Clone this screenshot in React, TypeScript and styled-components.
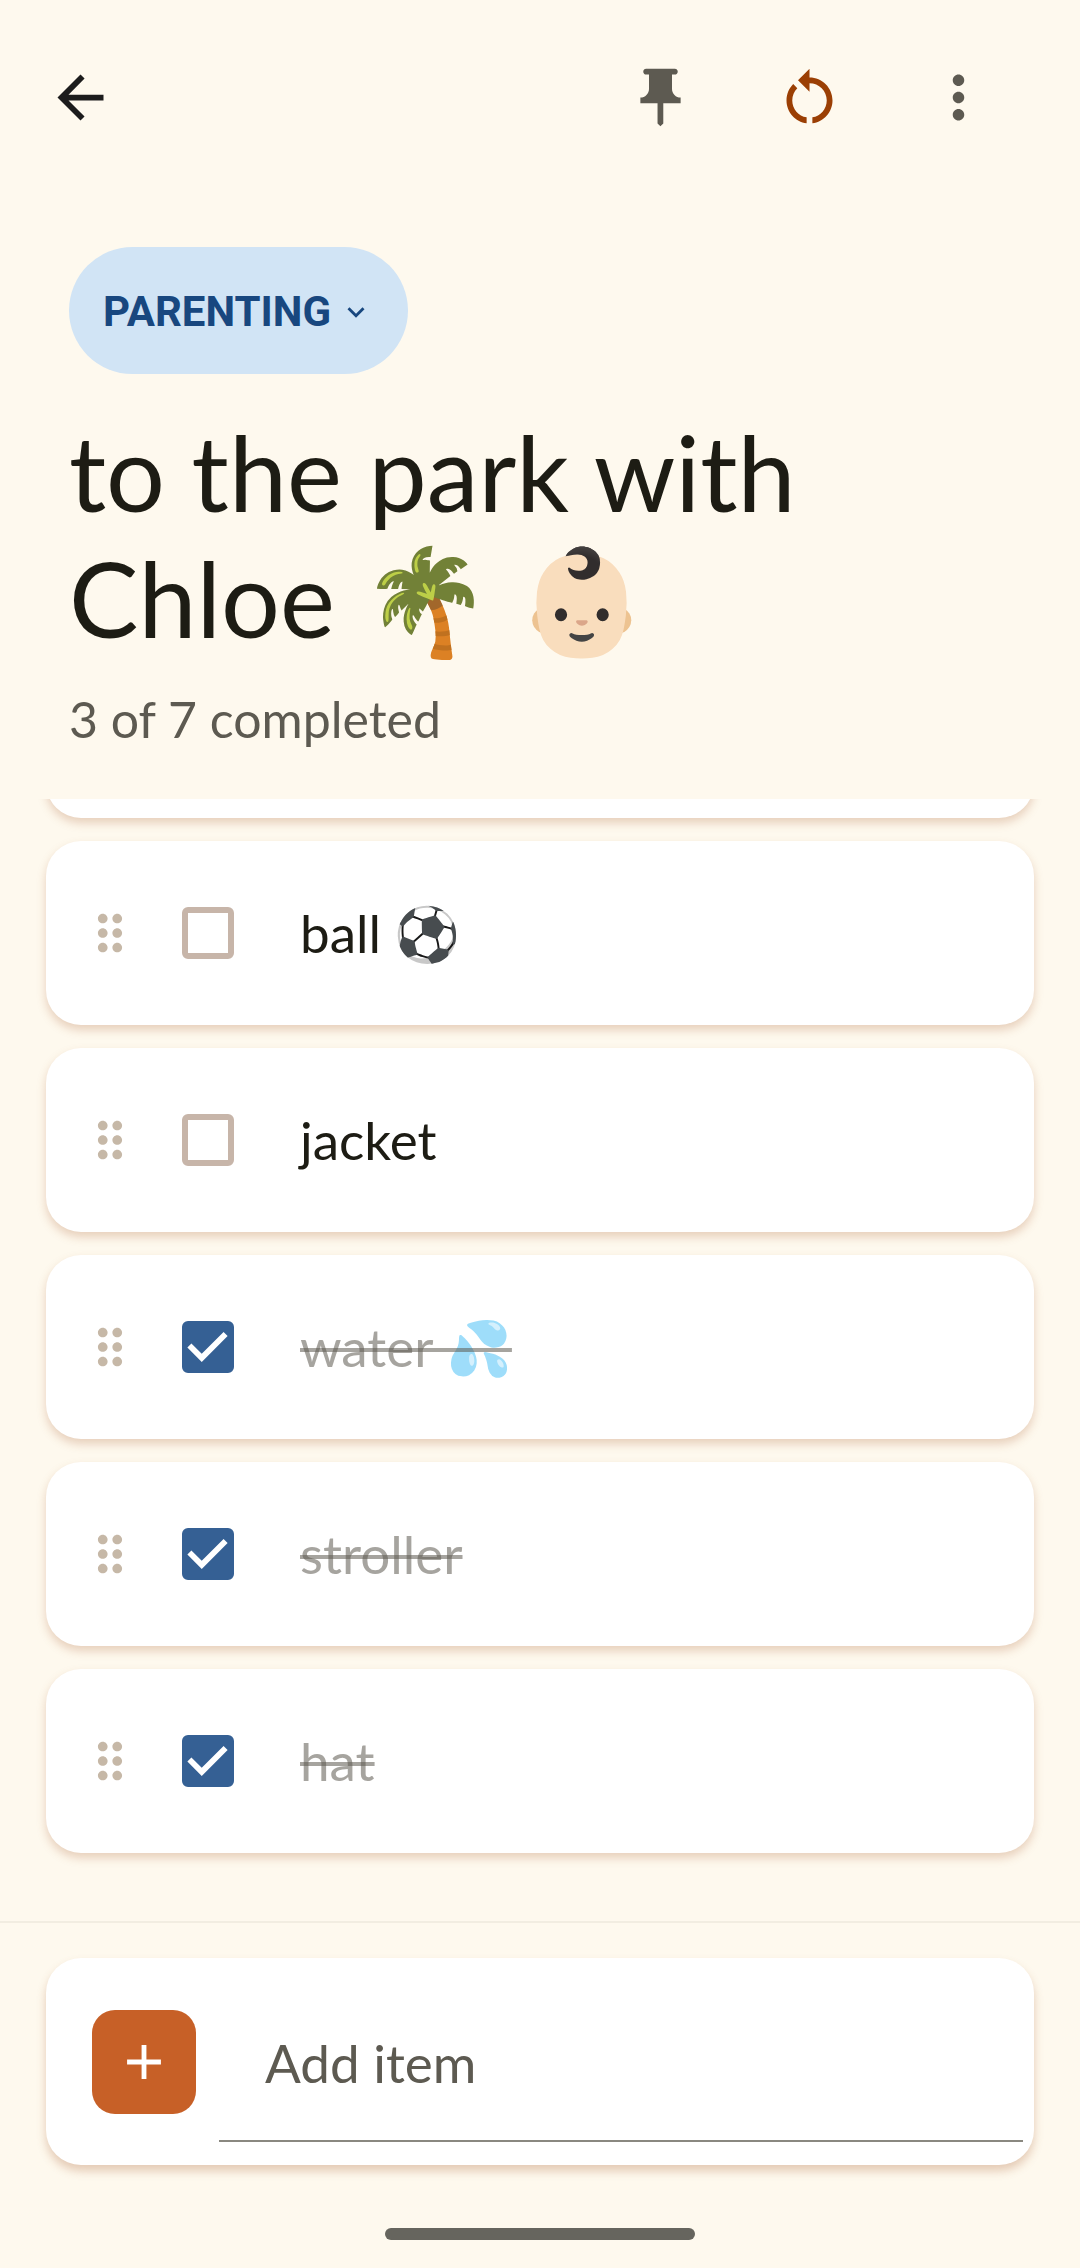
import * as React from 'react';
import styled, { createGlobalStyle, ThemeProvider } from 'styled-components';

interface IItem {
  id: number;
  name: string;
  isDone: boolean;
}

const theme = {
  colors: {
    background: '#fef9ee',
    card: '#ffffff',
    text: '#1d1c14',
    muted: '#5d5a51',
    faded: 'rgba(93, 90, 81, 0.55)',
    handle: '#c6b8a7',
    box: '#c7b5a9',
    blue: '#356094',
    chip: '#d1e4f5',
    chipText: '#18477f',
    orange: '#c76027',
    rust: '#9b3f04',
    divider: '#f2ede1',
    underline: '#8a8880',
    navigation: '#66655e',
  },
};

const GlobalStyle = createGlobalStyle`
  * {
    box-sizing: border-box;
  }

  body {
    margin: 0;
    background: ${theme.colors.background};
    color: ${theme.colors.text};
    font-family: Lato, 'Noto Color Emoji', sans-serif;
  }

  button,
  input {
    font-family: inherit;
  }
`;

const Page = styled.div`
  height: 100vh;
  display: flex;
  flex-direction: column;
`;

const Toolbar = styled.nav`
  display: flex;
  align-items: center;
  gap: 11px;
  padding: 28px 53px 28px 11px;
`;

const Spacer = styled.div`
  flex: 1;
`;

const IconButton = styled.button<{ $color: string }>`
  width: 138px;
  height: 138px;
  padding: 0;
  display: flex;
  align-items: center;
  justify-content: center;
  border: none;
  background: none;
  color: ${({ $color }) => $color};
  cursor: pointer;
`;

const Icon = styled.svg<{ $size: number }>`
  width: ${({ $size }) => $size}px;
  height: ${({ $size }) => $size}px;
  flex: none;
  fill: currentColor;
`;

const Header = styled.header`
  display: flex;
  flex-direction: column;
  align-items: flex-start;
  padding: 53px 69px 45px;
`;

const CategoryChip = styled.button`
  height: 127px;
  padding: 2px 35px 0 34px;
  display: flex;
  align-items: center;
  gap: 8px;
  border: none;
  border-radius: 64px;
  background: ${({ theme }) => theme.colors.chip};
  color: ${({ theme }) => theme.colors.chipText};
  font-family: Roboto, sans-serif;
  font-size: 42px;
  font-weight: 700;
  cursor: pointer;
`;

const Title = styled.h1`
  margin: 35px 0 24px;
  font-size: 104px;
  font-weight: 400;
  line-height: 126px;
`;

const Progress = styled.p`
  margin: 0;
  color: ${({ theme }) => theme.colors.muted};
  font-size: 50px;
  line-height: 69px;
`;

const List = styled.ul`
  flex: 1;
  min-height: 0;
  margin: 0;
  padding: 0 46px 68px;
  display: flex;
  flex-direction: column;
  gap: 23px;
  overflow-y: auto;
  scrollbar-width: none;
  list-style: none;
`;

const Row = styled.li`
  flex: none;
  height: 184px;
  padding: 0 35px;
  display: flex;
  align-items: center;
  border-radius: 35px;
  background: ${({ theme }) => theme.colors.card};
  box-shadow: 0 5px 10px rgba(170, 97, 50, 0.27);
`;

const Handle = styled.span`
  display: flex;
  margin-right: 34px;
  color: ${({ theme }) => theme.colors.handle};
  cursor: grab;
`;

const CheckboxBox = styled.span`
  width: 69px;
  display: grid;
  place-items: center;
  margin-right: 58px;
  color: ${({ theme }) => theme.colors.card};

  > * {
    grid-area: 1 / 1;
  }

  > svg {
    pointer-events: none;
  }
`;

const Checkbox = styled.input`
  appearance: none;
  width: 52px;
  height: 52px;
  margin: 0;
  border: 6px solid ${({ theme }) => theme.colors.box};
  border-radius: 6px;
  cursor: pointer;

  &:checked {
    border-color: ${({ theme }) => theme.colors.blue};
    background: ${({ theme }) => theme.colors.blue};
  }
`;

const ItemLabel = styled.label<{ $isDone: boolean }>`
  padding-bottom: 2px;
  font-size: 53px;
  line-height: 69px;

  ${({ $isDone, theme }) => $isDone ? `
    color: ${theme.colors.faded};
    text-decoration: line-through;
    text-decoration-thickness: 4px;
  ` : ''}
`;

const Footer = styled.footer`
  display: flex;
  flex-direction: column;
  border-top: 2px solid ${({ theme }) => theme.colors.divider};
  padding: 35px 46px 28px;
`;

const AddForm = styled.form`
  display: flex;
  align-items: center;
  gap: 23px;
  padding: 23px 11px 23px 46px;
  border-radius: 35px;
  background: ${({ theme }) => theme.colors.card};
  box-shadow: 0 6px 10px rgba(170, 97, 50, 0.3);
`;

const AddButton = styled.button`
  width: 104px;
  height: 104px;
  flex: none;
  padding: 0;
  display: flex;
  align-items: center;
  justify-content: center;
  border: none;
  border-radius: 23px;
  background: ${({ theme }) => theme.colors.orange};
  color: ${({ theme }) => theme.colors.card};
  cursor: pointer;
`;

const AddInput = styled.input`
  flex: 1;
  min-width: 0;
  height: 161px;
  padding: 4px 46px 0;
  border: none;
  border-bottom: 2px solid ${({ theme }) => theme.colors.underline};
  outline: none;
  background: none;
  color: ${({ theme }) => theme.colors.text};
  font-size: 53px;

  &::placeholder {
    color: ${({ theme }) => theme.colors.muted};
    opacity: 1;
  }
`;

const NavigationBar = styled.div`
  width: 310px;
  height: 12px;
  margin: 63px auto 0;
  border-radius: 6px;
  background: ${({ theme }) => theme.colors.navigation};
`;

const paths = {
  back: 'M20 11H7.83l5.59-5.59L12 4l-8 8 8 8 1.41-1.41L7.83 13H20v-2z',
  pin: 'M16 9V4h1c.55 0 1-.45 1-1s-.45-1-1-1H7c-.55 0-1 .45-1 1s.45 1 1 1h1v5c0 1.66-1.34 3-3 3v2h5.97v7l1 1 1-1v-7H19v-2c-1.66 0-3-1.34-3-3z',
  restart: 'M12 5V2L8 6l4 4V7c3.31 0 6 2.69 6 6 0 2.97-2.17 5.43-5 5.91v2.02c3.95-.49 7-3.85 7-7.93 0-4.42-3.58-8-8-8zM6 13c0-1.65.67-3.15 1.76-4.24L6.34 7.34C4.9 8.79 4 10.79 4 13c0 4.08 3.05 7.44 7 7.93v-2.02c-2.83-.48-5-2.94-5-5.91z',
  more: 'M12 8c1.1 0 2-.9 2-2s-.9-2-2-2-2 .9-2 2 .9 2 2 2zm0 2c-1.1 0-2 .9-2 2s.9 2 2 2 2-.9 2-2-.9-2-2-2zm0 6c-1.1 0-2 .9-2 2s.9 2 2 2 2-.9 2-2-.9-2-2-2z',
  expand: 'M16.59 8.59L12 13.17 7.41 8.59 6 10l6 6 6-6z',
  drag: 'M11 18c0 1.1-.9 2-2 2s-2-.9-2-2 .9-2 2-2 2 .9 2 2zm-2-8c-1.1 0-2 .9-2 2s.9 2 2 2 2-.9 2-2-.9-2-2-2zm0-6c-1.1 0-2 .9-2 2s.9 2 2 2 2-.9 2-2-.9-2-2-2zm6 4c1.1 0 2-.9 2-2s-.9-2-2-2-2 .9-2 2 .9 2 2 2zm0 2c-1.1 0-2 .9-2 2s.9 2 2 2 2-.9 2-2-.9-2-2-2zm0 6c-1.1 0-2 .9-2 2s.9 2 2 2 2-.9 2-2-.9-2-2-2z',
  check: 'M10 17l-5-5 1.41-1.41L10 14.17l7.59-7.59L19 8z',
  add: 'M19 13h-6v6h-2v-6H5v-2h6V5h2v6h6v2z',
};

const MaterialIcon: React.FC<{ name: keyof typeof paths; size?: number }> = ({ name, size = 69 }) => (
  <Icon $size={size} viewBox="0 0 24 24" aria-hidden="true">
    <path d={paths[name]} />
  </Icon>
);

const initialItems: IItem[] = [
  { id: 1, name: '', isDone: false },
  { id: 2, name: '', isDone: false },
  { id: 3, name: 'ball ⚽', isDone: false },
  { id: 4, name: 'jacket', isDone: false },
  { id: 5, name: 'water 💦', isDone: true },
  { id: 6, name: 'stroller', isDone: true },
  { id: 7, name: 'hat', isDone: true },
];

const App: React.FC = () => {
  const [items, setItems] = React.useState(initialItems);
  const [newItem, setNewItem] = React.useState('');
  const listRef = React.useRef<HTMLUListElement>(null);

  // keep the end of the list in view
  React.useLayoutEffect(() => {
    if (listRef.current) {
      listRef.current.scrollTop = listRef.current.scrollHeight;
    }
  }, [items.length]);

  const toggleItem = (id: number) => {
    setItems(items.map((i) => i.id === id ? { ...i, isDone: !i.isDone } : i));
  };

  const addItem = (e: React.FormEvent) => {
    e.preventDefault();
    if (newItem) {
      setItems([...items, { id: items.length + 1, name: newItem, isDone: false }]);
      setNewItem('');
    }
  };

  return (
    <ThemeProvider theme={theme}>
      <GlobalStyle />
      <Page>
        <Toolbar>
          <IconButton $color="#1c1c1c" aria-label="Back"><MaterialIcon name="back" /></IconButton>
          <Spacer />
          <IconButton $color={theme.colors.muted} aria-label="Pin"><MaterialIcon name="pin" /></IconButton>
          <IconButton $color={theme.colors.rust} aria-label="Reset"><MaterialIcon name="restart" /></IconButton>
          <IconButton $color={theme.colors.muted} aria-label="More"><MaterialIcon name="more" /></IconButton>
        </Toolbar>
        <Header>
          <CategoryChip>
            PARENTING
            <MaterialIcon name="expand" size={34} />
          </CategoryChip>
          <Title>to the park with Chloe 🌴 👶🏻</Title>
          <Progress>{items.filter((i) => i.isDone).length} of {items.length} completed</Progress>
        </Header>
        <List ref={listRef}>
          {items.map((item) => (
            <Row key={item.id}>
              <Handle><MaterialIcon name="drag" size={58} /></Handle>
              <CheckboxBox>
                <Checkbox
                  id={`item-${item.id}`}
                  type="checkbox"
                  checked={item.isDone}
                  onChange={() => toggleItem(item.id)}
                />
                {item.isDone && <MaterialIcon name="check" />}
              </CheckboxBox>
              <ItemLabel htmlFor={`item-${item.id}`} $isDone={item.isDone}>{item.name}</ItemLabel>
            </Row>
          ))}
        </List>
        <Footer>
          <AddForm onSubmit={addItem}>
            <AddButton type="submit" aria-label="Add"><MaterialIcon name="add" size={58} /></AddButton>
            <AddInput
              aria-label="Add item"
              placeholder="Add item"
              value={newItem}
              onChange={(e) => setNewItem(e.target.value)}
            />
          </AddForm>
          <NavigationBar />
        </Footer>
      </Page>
    </ThemeProvider>
  );
};

export default App;
